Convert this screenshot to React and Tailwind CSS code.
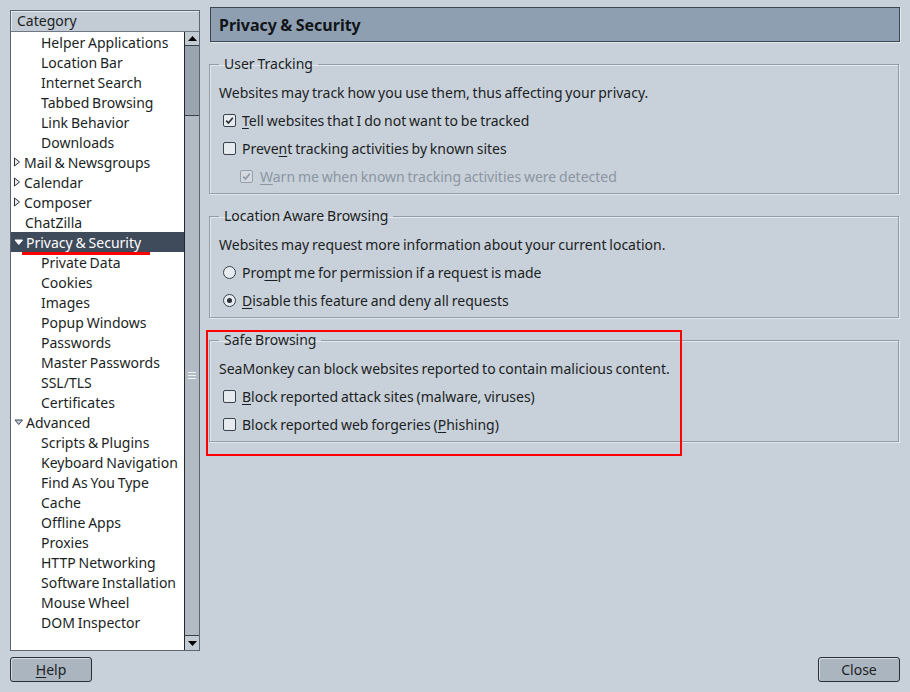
import React from "react";

const items = [
  { t: "Helper Applications", l: 1 },
  { t: "Location Bar", l: 1 },
  { t: "Internet Search", l: 1 },
  { t: "Tabbed Browsing", l: 1 },
  { t: "Link Behavior", l: 1 },
  { t: "Downloads", l: 1 },
  { t: "Mail & Newsgroups", l: 0, tw: "closed" },
  { t: "Calendar", l: 0, tw: "closed" },
  { t: "Composer", l: 0, tw: "closed" },
  { t: "ChatZilla", l: 0 },
  { t: "Privacy & Security", l: 0, tw: "open", sel: true },
  { t: "Private Data", l: 1 },
  { t: "Cookies", l: 1 },
  { t: "Images", l: 1 },
  { t: "Popup Windows", l: 1 },
  { t: "Passwords", l: 1 },
  { t: "Master Passwords", l: 1 },
  { t: "SSL/TLS", l: 1 },
  { t: "Certificates", l: 1 },
  { t: "Advanced", l: 0, tw: "open" },
  { t: "Scripts & Plugins", l: 1 },
  { t: "Keyboard Navigation", l: 1 },
  { t: "Find As You Type", l: 1 },
  { t: "Cache", l: 1 },
  { t: "Offline Apps", l: 1 },
  { t: "Proxies", l: 1 },
  { t: "HTTP Networking", l: 1 },
  { t: "Software Installation", l: 1 },
  { t: "Mouse Wheel", l: 1 },
  { t: "DOM Inspector", l: 1 },
];

function Twisty({ kind, sel }) {
  if (kind === "closed") {
    return (
      <svg width="8" height="10" viewBox="0 0 8 10" className="mr-[3px]">
        <path d="M1.5 1 L6.5 5 L1.5 9 Z" fill="#e9edf1" stroke="#2c333b" strokeWidth="1" />
      </svg>
    );
  }
  return (
    <svg width="10" height="7" viewBox="0 0 10 7" className="mr-[2px] ml-[1px]">
      <path
        d="M1 1 L8.5 1 L4.75 5.5 Z"
        fill={sel ? "#ffffff" : "#c3d0dd"}
        stroke={sel ? "#ffffff" : "#3c4550"}
        strokeWidth="1"
      />
    </svg>
  );
}

function Check({ checked, disabled }) {
  return (
    <span
      className={
        disabled
          ? "w-[13px] h-[13px] border border-[#97a1ab] bg-[#d3d9df] rounded-[2px] flex items-center justify-center shrink-0"
          : "w-[13px] h-[13px] border border-[#3a424b] bg-[#e6ebf0] rounded-[2px] flex items-center justify-center shrink-0"
      }
    >
      {checked && (
        <svg width="9" height="9" viewBox="0 0 9 9">
          <path
            d="M1.2 4.6 L3.5 7 L7.8 1.8"
            fill="none"
            stroke={disabled ? "#8e99a5" : "#2a3037"}
            strokeWidth="1.7"
          />
        </svg>
      )}
    </span>
  );
}

function Radio({ on }) {
  return (
    <span className="w-[13px] h-[13px] rounded-full border border-[#3a424b] bg-[#e6ebf0] flex items-center justify-center shrink-0">
      {on && <span className="w-[5px] h-[5px] rounded-full bg-[#2a3037]" />}
    </span>
  );
}

function Group({ title, children }) {
  return (
    <fieldset className="w-[690px] border border-[#949da7] shadow-[inset_1px_1px_0_#e3e8ed,1px_1px_0_#e3e8ed] px-[9px] pt-[5px] pb-[3px]">
      <legend className="px-[5px] h-[18px] leading-[18px] text-[#1b1f24]">{title}</legend>
      {children}
    </fieldset>
  );
}

function Row({ children, className = "" }) {
  return <div className={"h-[28px] flex items-center " + className}>{children}</div>;
}

export default function App() {
  return (
    <div className="w-[910px] h-[692px] bg-[#c8d0d9] flex flex-col font-['Noto_Sans',sans-serif] text-[14px] text-[#1b1f24] [word-spacing:-0.8px] relative overflow-hidden">
      <div className="flex">
        {/* Left tree */}
        <div className="ml-[10px] mt-[10px] w-[190px] h-[641px] border border-[#5d6670] flex flex-col bg-white">
          <div className="h-[21px] bg-[#c3cbd4] border-b border-[#6f7882] shadow-[inset_1px_1px_0_#e4e9ee] flex items-center pl-[6px] leading-none">
            Category
          </div>
          <div className="flex flex-1 min-h-0">
            <div className="flex-1 flex flex-col relative">
              {items.map((it, i) => (
                <div
                  key={i}
                  className={
                    it.sel
                      ? "h-[20px] flex items-center bg-[#3f4a5a] text-white"
                      : "h-[20px] flex items-center"
                  }
                >
                  {it.l === 1 ? (
                    <span className="pl-[30px]">{it.t}</span>
                  ) : (
                    <span className="flex items-center pl-[2px]">
                      {it.tw ? <Twisty kind={it.tw} sel={it.sel} /> : <span className="w-[12px]" />}
                      <span>{it.t}</span>
                    </span>
                  )}
                </div>
              ))}
              <div className="absolute left-[11px] top-[220px] w-[128px] h-[3px] bg-[#ff0000]" />
            </div>
            {/* scrollbar */}
            <div className="w-[15px] border-l border-[#23282e] bg-[#b2bac3] flex flex-col">
              <div className="h-[14px] bg-[#c3cbd3] border-b border-[#3a4149] flex items-center justify-center">
                <svg width="9" height="5" viewBox="0 0 9 5">
                  <path d="M0 5 L4.5 0 L9 5 Z" fill="#000" />
                </svg>
              </div>
              <div className="h-[70px] bg-[#9ba5af] border-b border-[#3a4149]" />
              <div className="flex-1 flex items-center justify-center">
                <div className="flex flex-col gap-[2px]">
                  <div className="w-[8px] h-px bg-[#f2f4f6]" />
                  <div className="w-[8px] h-px bg-[#f2f4f6]" />
                  <div className="w-[8px] h-px bg-[#f2f4f6]" />
                </div>
              </div>
              <div className="h-[15px] bg-[#c3cbd3] border-t border-[#3a4149] flex items-center justify-center">
                <svg width="9" height="5" viewBox="0 0 9 5">
                  <path d="M0 0 L4.5 5 L9 0 Z" fill="#000" />
                </svg>
              </div>
            </div>
          </div>
        </div>

        {/* Right pane */}
        <div className="ml-[9px] pt-[7px] flex flex-col">
          <div className="ml-px w-[690px] h-[35px] bg-[#8e9fb1] border border-[#3d4752] shadow-[1px_1px_0_#e3e8ed] flex items-center pl-[8px] font-bold text-[16px] text-[#111418]">
            Privacy &amp; Security
          </div>

          <div className="mt-[13px]">
            <Group title="User Tracking">
              <Row>Websites may track how you use them, thus affecting your privacy.</Row>
              <Row className="gap-[6px] pl-[4px]">
                <Check checked />
                <span>
                  <u className="underline-offset-2">T</u>ell websites that I do not want to be tracked
                </span>
              </Row>
              <Row className="gap-[6px] pl-[4px]">
                <Check />
                <span>
                  Preve<u className="underline-offset-2">n</u>t tracking activities by known sites
                </span>
              </Row>
              <Row className="gap-[7px] pl-[21px] text-[#8b96a2]">
                <Check checked disabled />
                <span>
                  <u className="underline-offset-2">W</u>arn me when known tracking activities were detected
                </span>
              </Row>
            </Group>
          </div>

          <div className="mt-[13px]">
            <Group title="Location Aware Browsing">
              <Row>Websites may request more information about your current location.</Row>
              <Row className="gap-[6px] pl-[4px]">
                <Radio />
                <span>
                  Pro<u className="underline-offset-2">m</u>pt me for permission if a request is made
                </span>
              </Row>
              <Row className="gap-[6px] pl-[4px]">
                <Radio on />
                <span>
                  <u className="underline-offset-2">D</u>isable this feature and deny all requests
                </span>
              </Row>
            </Group>
          </div>

          <div className="mt-[13px]">
            <Group title="Safe Browsing">
              <Row>SeaMonkey can block websites reported to contain malicious content.</Row>
              <Row className="gap-[6px] pl-[4px]">
                <Check />
                <span>
                  <u className="underline-offset-2">B</u>lock reported attack sites (malware, viruses)
                </span>
              </Row>
              <Row className="gap-[6px] pl-[4px]">
                <Check />
                <span>
                  Block reported web forgeries (<u className="underline-offset-2">P</u>hishing)
                </span>
              </Row>
            </Group>
          </div>
        </div>
      </div>

      {/* Buttons */}
      <div className="flex justify-between px-[10px] mt-[6px]">
        <button className="w-[82px] h-[25px] bg-[#abb5c0] border border-[#2b3037] rounded-[3px] flex items-center justify-center shadow-[inset_1px_1px_0_#d3dae1]">
          <span>
            <u className="underline-offset-2">H</u>elp
          </span>
        </button>
        <button className="w-[82px] h-[25px] bg-[#abb5c0] border border-[#2b3037] rounded-[3px] flex items-center justify-center shadow-[inset_1px_1px_0_#d3dae1]">
          Close
        </button>
      </div>

      {/* Red annotation box */}
      <div className="absolute left-[206px] top-[330px] w-[476px] h-[126px] border-2 border-[#ff0000] pointer-events-none" />
    </div>
  );
}
